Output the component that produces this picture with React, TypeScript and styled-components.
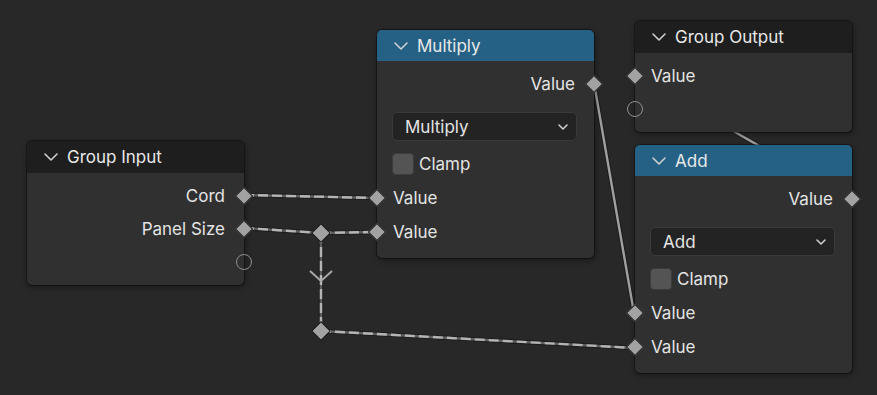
import styled, { createGlobalStyle } from 'styled-components';

const Global = createGlobalStyle`
  html, body {
    margin: 0;
    padding: 0;
    background: #282828;
  }
  body {
    font-family: Inter, "Noto Sans", sans-serif;
    color: #e4e4e4;
  }
`;

const Canvas = styled.div`
  position: relative;
  width: 877px;
  height: 395px;
  overflow: hidden;
  background: #282828;
`;

const Links = styled.svg`
  position: absolute;
  inset: 0;
`;

const Node = styled.div<{ $x: number; $y: number; $w: number }>`
  position: absolute;
  left: ${(p) => p.$x}px;
  top: ${(p) => p.$y}px;
  width: ${(p) => p.$w}px;
  display: flex;
  flex-direction: column;
  background: #303030;
  border-radius: 5px;
  box-shadow: 0 0 0 1px rgba(0, 0, 0, 0.35), 1px 2px 6px rgba(0, 0, 0, 0.45);
`;

const Header = styled.div<{ $color: string; $h: number }>`
  height: ${(p) => p.$h}px;
  display: flex;
  align-items: center;
  gap: 9px;
  padding-left: 17px;
  background: ${(p) => p.$color};
  border-radius: 5px 5px 0 0;
  font-size: 17px;
  color: #e8e8e8;
`;

const Body = styled.div`
  display: flex;
  flex-direction: column;
  padding: 6px 0 7px;
`;

const Row = styled.div<{ $out?: boolean; $h?: number }>`
  position: relative;
  height: ${(p) => p.$h ?? 33}px;
  display: flex;
  align-items: center;
  justify-content: ${(p) => (p.$out ? 'flex-end' : 'flex-start')};
  padding: ${(p) => (p.$out ? '0 19px 0 0' : '0 0 0 16px')};
  font-size: 17px;
  color: #e4e4e4;
`;

const Socket = styled.span<{ $out?: boolean }>`
  position: absolute;
  top: 50%;
  left: ${(p) => (p.$out ? '100%' : '0')};
  width: 13px;
  height: 13px;
  box-sizing: border-box;
  background: #a2a2a2;
  border: 1px solid #1a1a1a;
  transform: translate(-50%, -50%) rotate(45deg);
`;

const EmptySocket = styled.span<{ $out?: boolean }>`
  position: absolute;
  top: 50%;
  left: ${(p) => (p.$out ? '100%' : '0')};
  width: 16px;
  height: 16px;
  box-sizing: border-box;
  border: 1.5px solid #8f8f8f;
  border-radius: 50%;
  transform: translate(-50%, -50%);
`;

const Select = styled.div`
  margin: 12px 17px 0 15px;
  height: 29px;
  box-sizing: border-box;
  display: flex;
  align-items: center;
  justify-content: space-between;
  padding: 0 8px 0 12px;
  background: #232323;
  border: 1px solid #3a3a3a;
  border-radius: 5px;
  font-size: 17px;
  color: #e4e4e4;
`;

const CheckRow = styled.label`
  margin: 12px 0 0 15px;
  height: 22px;
  display: flex;
  align-items: center;
  gap: 5px;
  font-size: 17px;
  color: #e4e4e4;
`;

const Box = styled.span`
  width: 22px;
  height: 22px;
  box-sizing: border-box;
  background: #545454;
  border: 1px solid #3c3c3c;
  border-radius: 4px;
`;

const Inputs = styled.div`
  margin-top: 6px;
  display: flex;
  flex-direction: column;
`;

const Chevron = ({ w = 14, h = 8 }: { w?: number; h?: number }) => (
  <svg width={w} height={h} viewBox={`0 0 ${w} ${h}`} style={{ flexShrink: 0 }}>
    <polyline
      points={`1,1 ${w / 2},${h - 1} ${w - 1},1`}
      fill="none"
      stroke="#d4d4d4"
      strokeWidth="1.5"
      strokeLinecap="round"
      strokeLinejoin="round"
    />
  </svg>
);

type Pt = [number, number];

const Link = ({ a, b, dashed }: { a: Pt; b: Pt; dashed?: boolean }) => {
  const d = `M${a[0]},${a[1]} L${b[0]},${b[1]}`;
  return (
    <g>
      <path d={d} stroke="#181818" strokeWidth="4.5" strokeOpacity="0.7" fill="none" />
      <path d={d} stroke={dashed ? '#5e5e5e' : '#a0a0a0'} strokeWidth="2.4" fill="none" />
      {dashed && <path d={d} stroke="#b4b4b4" strokeWidth="2.4" strokeDasharray="10 4" fill="none" />}
    </g>
  );
};

const Reroute = ({ at }: { at: Pt }) => (
  <rect
    x={at[0] - 6.5}
    y={at[1] - 6.5}
    width="13"
    height="13"
    fill="#a2a2a2"
    stroke="#1a1a1a"
    strokeWidth="1"
    transform={`rotate(45 ${at[0]} ${at[1]})`}
  />
);

function MathNode({ x, y, title }: { x: number; y: number; title: string }) {
  return (
    <Node $x={x} $y={y} $w={217}>
      <Header $color="#246185" $h={31}>
        <Chevron />
        {title}
      </Header>
      <Body style={{ paddingBottom: 9 }}>
        <Row $out>
          Value
          <Socket $out />
        </Row>
        <Select>
          {title}
          <Chevron w={10} h={6} />
        </Select>
        <CheckRow>
          <Box />
          Clamp
        </CheckRow>
        <Inputs>
          <Row $h={34}>
            <Socket />
            Value
          </Row>
          <Row $h={34}>
            <Socket />
            Value
          </Row>
        </Inputs>
      </Body>
    </Node>
  );
}

export default function App() {
  return (
    <Canvas>
      <Global />
      <Links width="877" height="395">
        <Link a={[852, 199]} b={[635, 75]} />
        <Link a={[244, 195]} b={[377, 198]} dashed />
        <Link a={[244, 228]} b={[321, 233]} dashed />
        <Link a={[321, 233]} b={[377, 232]} dashed />
        <Link a={[321, 233]} b={[321, 331]} dashed />
        <Link a={[321, 331]} b={[635, 348]} dashed />
        <Link a={[594, 83]} b={[634, 313]} />
        <polyline
          points="310,271 321,281 332,271"
          fill="none"
          stroke="#a8a8a8"
          strokeWidth="2"
        />
        <Reroute at={[321, 233]} />
        <Reroute at={[321, 331]} />
      </Links>

      <Node $x={27} $y={141} $w={217}>
        <Header $color="#1e1e1e" $h={32}>
          <Chevron />
          Group Input
        </Header>
        <Body>
          <Row $out>
            Cord
            <Socket $out />
          </Row>
          <Row $out>
            Panel Size
            <Socket $out />
          </Row>
          <Row $out>
            <EmptySocket $out />
          </Row>
        </Body>
      </Node>

      <MathNode x={377} y={30} title="Multiply" />

      <Node $x={635} $y={21} $w={217}>
        <Header $color="#1e1e1e" $h={32}>
          <Chevron />
          Group Output
        </Header>
        <Body>
          <Row>
            <Socket />
            Value
          </Row>
          <Row>
            <EmptySocket />
          </Row>
        </Body>
      </Node>

      <MathNode x={635} y={145} title="Add" />
    </Canvas>
  );
}
